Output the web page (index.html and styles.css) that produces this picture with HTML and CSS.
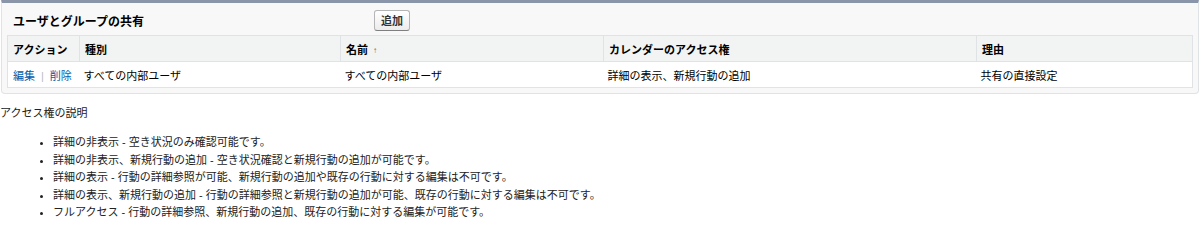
FILE: index.html
```html
<!DOCTYPE html>
<html lang="ja">
<head>
<meta charset="utf-8">
<title>共有</title>
<link rel="stylesheet" href="styles.css">
</head>
<body>
<div class="panel">
  <div class="panel-head">
    <h3 class="panel-title">ユーザとグループの共有</h3>
    <button class="btn" type="button">追加</button>
  </div>
  <table class="list">
    <colgroup>
      <col class="c-action">
      <col class="c-type">
      <col class="c-name">
      <col class="c-access">
      <col class="c-reason">
    </colgroup>
    <thead>
      <tr>
        <th>アクション</th>
        <th>種別</th>
        <th>名前 <span class="sort">↑</span></th>
        <th>カレンダーのアクセス権</th>
        <th>理由</th>
      </tr>
    </thead>
    <tbody>
      <tr>
        <td class="actions"><a href="#">編集</a><span class="sep">|</span><a href="#">削除</a></td>
        <td>すべての内部ユーザ</td>
        <td>すべての内部ユーザ</td>
        <td>詳細の表示、新規行動の追加</td>
        <td>共有の直接設定</td>
      </tr>
    </tbody>
  </table>
</div>
<p class="desc-title">アクセス権の説明</p>
<ul class="desc-list">
  <li>詳細の非表示 - 空き状況のみ確認可能です。</li>
  <li>詳細の非表示、新規行動の追加 - 空き状況確認と新規行動の追加が可能です。</li>
  <li>詳細の表示 - 行動の詳細参照が可能、新規行動の追加や既存の行動に対する編集は不可です。</li>
  <li>詳細の表示、新規行動の追加 - 行動の詳細参照と新規行動の追加が可能、既存の行動に対する編集は不可です。</li>
  <li>フルアクセス - 行動の詳細参照、新規行動の追加、既存の行動に対する編集が可能です。</li>
</ul>
</body>
</html>
```

FILE: styles.css
```css
* { box-sizing: border-box; }

body {
  margin: 0;
  background: #ffffff;
  font-family: "Liberation Sans", "Noto Sans CJK JP", sans-serif;
  font-size: 11px;
  color: #222;
}

.panel {
  margin: 0 1px 0 1px;
  background: #f8f8f8;
  border: 1px solid #e0e3e5;
  border-top: 3px solid #8a95aa;
  border-radius: 0 0 4px 4px;
  padding: 0 5px 5px 5px;
}

.panel-head {
  display: flex;
  align-items: center;
  height: 32px;
  padding-top: 2px;
}

.panel-title {
  margin: 0;
  width: 367px;
  padding-left: 6px;
  font-size: 12px;
  font-weight: bold;
  color: #000;
}

.btn {
  height: 21px;
  padding: 0 6px;
  font-family: inherit;
  font-size: 11px;
  font-weight: bold;
  color: #333;
  background: linear-gradient(#ffffff, #ececec);
  border: 1px solid #b5b5b5;
  border-bottom-color: #7f7f7f;
  border-radius: 3px;
}

.list {
  width: 100%;
  border-collapse: collapse;
  background: #ffffff;
  border: 1px solid #e0e3e5;
}

.c-action { width: 72px; }
.c-type { width: 261px; }
.c-name { width: 263px; }
.c-access { width: 373px; }
.c-reason { width: 216px; }

.list th {
  height: 26px;
  background: #f2f3f3;
  border: 1px solid #e0e3e5;
  text-align: left;
  font-weight: bold;
  font-size: 11px;
  color: #000;
  padding: 0 5px;
}

.sort {
  font-size: 8px;
  color: #666;
  margin-left: 2px;
  vertical-align: 1px;
}

.list td {
  height: 26px;
  padding: 0 4px;
  border-bottom: 1px solid #e3e3e3;
  color: #000;
  white-space: nowrap;
}

.list td.actions {
  padding-left: 5px;
}

.actions a {
  color: #015ba7;
  text-decoration: none;
}

.sep {
  color: #bbb;
  margin: 0 6px;
}

.desc-title {
  margin: 10px 0 0 0;
  font-size: 11px;
  color: #222;
}

.desc-list {
  margin: 14px 0 0 0;
  padding-left: 53px;
  font-size: 11px;
  line-height: 17.5px;
  color: #222;
}
```
